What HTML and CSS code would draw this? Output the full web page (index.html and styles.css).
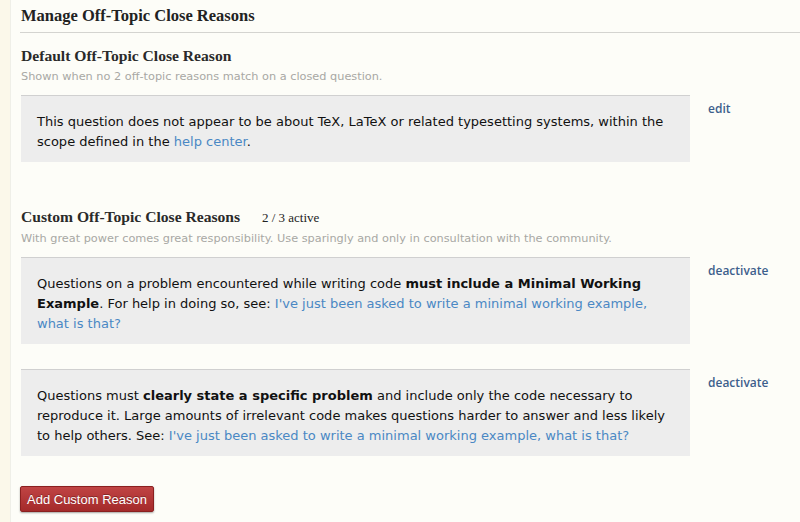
FILE: index.html
```html
<!DOCTYPE html>
<html>
<head>
<meta charset="utf-8">
<link rel="stylesheet" href="styles.css">
</head>
<body>
<div class="page">
  <div class="gutter"></div>
  <main class="content">
    <h1 class="title">Manage Off-Topic Close Reasons</h1>

    <section class="section">
      <h2 class="sec-head">Default Off-Topic Close Reason</h2>
      <p class="sec-sub">Shown when no 2 off-topic reasons match on a closed question.</p>
      <div class="row">
        <div class="reason">This question does not appear to be about TeX, LaTeX or related typesetting systems, within the scope defined in the <a href="#">help center</a>.</div>
        <a class="action" href="#">edit</a>
      </div>
    </section>

    <section class="section custom">
      <h2 class="sec-head">Custom Off-Topic Close Reasons <span class="count">2 / 3 active</span></h2>
      <p class="sec-sub">With great power comes great responsibility. Use sparingly and only in consultation with the community.</p>
      <div class="row">
        <div class="reason">Questions on a problem encountered while writing code <b>must include a Minimal Working Example</b>. For help in doing so, see: <a href="#">I've just been asked to write a minimal working example, what is that?</a></div>
        <a class="action" href="#">deactivate</a>
      </div>
      <div class="row">
        <div class="reason">Questions must <b>clearly state a specific problem</b> and include only the code necessary to reproduce it. Large amounts of irrelevant code makes questions harder to answer and less likely to help others. See: <a href="#">I've just been asked to write a minimal working example, what is that?</a></div>
        <a class="action" href="#">deactivate</a>
      </div>
    </section>

    <button class="btn">Add Custom Reason</button>
  </main>
</div>
</body>
</html>
```
FILE: styles.css
```css
html, body {
  margin: 0;
  padding: 0;
  background: #fdfdf8;
}
.page {
  display: flex;
  min-height: 522px;
}
.gutter {
  width: 10px;
  flex: none;
  background: #fbf8ea;
  border-right: 1px solid #efefe8;
}
.content {
  flex: 1;
  padding-left: 9px;
}
.title {
  margin: 0;
  padding: 6px 0 7px 1px;
  font-family: "Liberation Serif", "DejaVu Serif", serif;
  font-weight: bold;
  font-size: 16.5px;
  line-height: 19px;
  color: #222;
  border-bottom: 1px solid #d4d4d0;
}
.section {
  padding-left: 1px;
}
.sec-head {
  margin: 13px 0 0;
  font-family: "Liberation Serif", "DejaVu Serif", serif;
  font-weight: bold;
  font-size: 15.6px;
  line-height: 19px;
  color: #2a2a2a;
}
.count {
  font-weight: normal;
  font-size: 13px;
  margin-left: 18px;
  color: #222;
}
.sec-sub {
  margin: 4px 0 0;
  font-family: "DejaVu Sans", sans-serif;
  font-size: 11.3px;
  line-height: 15px;
  color: #a8a8a4;
}
.row {
  display: flex;
  align-items: flex-start;
  margin-top: 11px;
}
.custom .row + .row {
  margin-top: 25px;
}
.reason {
  width: 637px;
  flex: none;
  background: #ededed;
  border-top: 1px solid #d0d0d0;
  padding: 16px 16px 10px;
  font-family: "DejaVu Sans", sans-serif;
  font-size: 13px;
  line-height: 20px;
  color: #111;
}
.reason b {
  font-weight: 700;
}
.reason a {
  color: #4a88c4;
  text-decoration: none;
}
.action {
  margin: 6px 0 0 18px;
  font-family: "Open Sans", "DejaVu Sans", sans-serif;
  font-size: 12px;
  line-height: 16px;
  font-weight: 600;
  color: #3d5f8c;
  text-decoration: none;
}
.custom {
  margin-top: 45px;
}
.custom .sec-head {
  margin-top: 0;
}
.btn {
  margin: 30px 0 0;
  display: block;
  height: 26px;
  padding: 0 6px;
  border: 1px solid #8a2020;
  border-radius: 2px;
  background: linear-gradient(#c04444, #a42a2a);
  box-shadow: 0 1px 2px rgba(0,0,0,0.35);
  font-family: "Liberation Sans", Arial, sans-serif;
  font-size: 13px;
  color: #fff;
  text-shadow: 0 -1px 0 rgba(0,0,0,0.3);
}
```
